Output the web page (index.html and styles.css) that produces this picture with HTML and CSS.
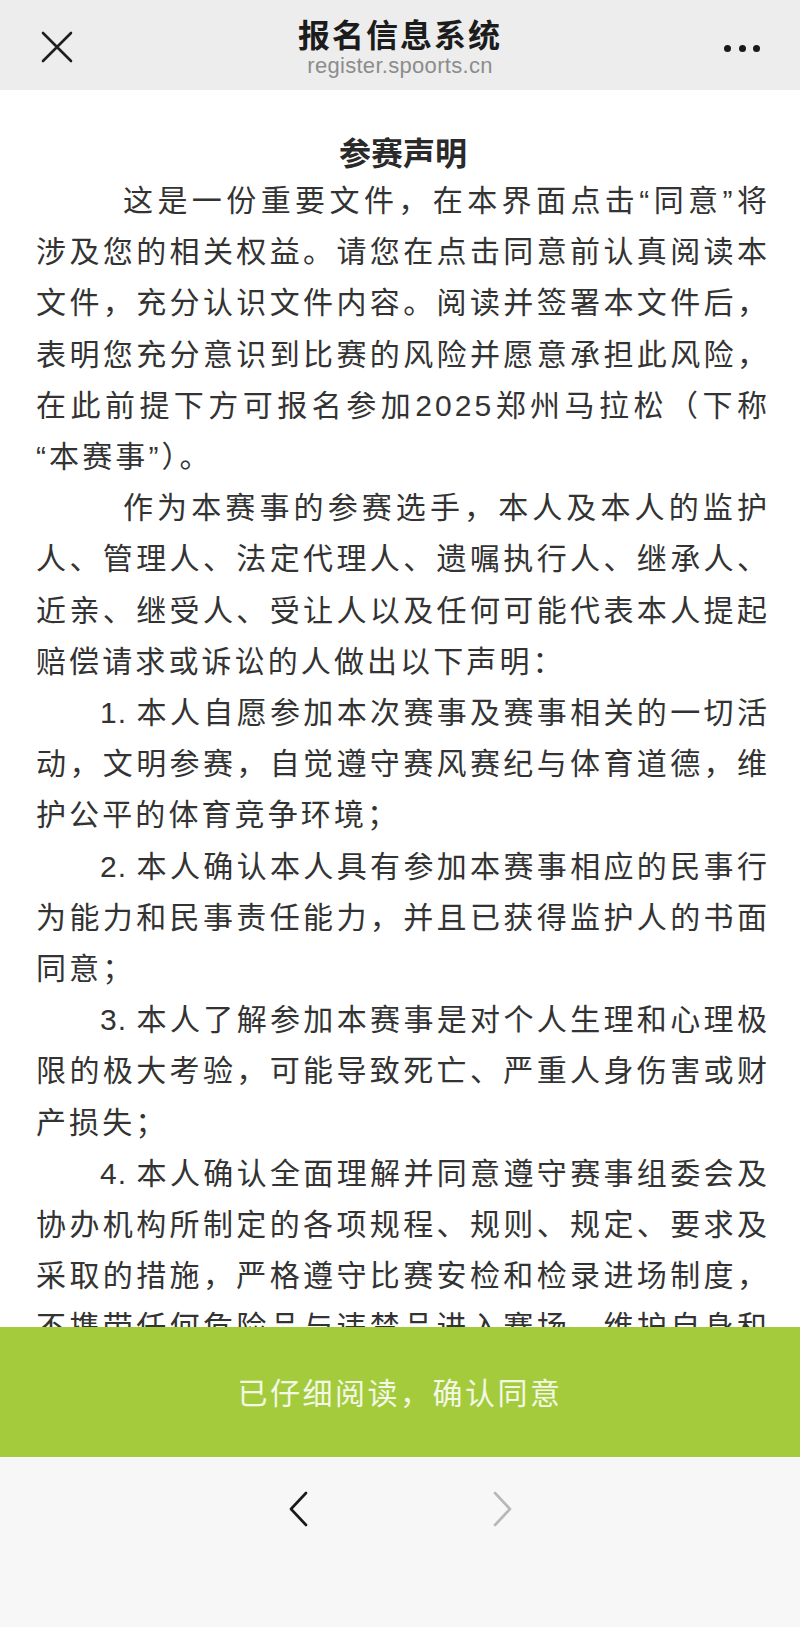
FILE: index.html
```html
<!DOCTYPE html>
<html lang="zh-CN">
<head>
<meta charset="utf-8">
<title>报名信息系统</title>
<link rel="stylesheet" href="styles.css">
</head>
<body>
<div class="app">
  <header class="topbar">
    <div class="topbar-left">
      <svg class="icon-close" width="32" height="32" viewBox="0 0 32 32" aria-hidden="true">
        <path d="M2 2 L30 30 M30 2 L2 30" stroke="#1f1f1f" stroke-width="2.6" stroke-linecap="round" fill="none"/>
      </svg>
    </div>
    <div class="topbar-center">
      <div class="topbar-title">报名信息系统</div>
      <div class="topbar-url">register.spoorts.cn</div>
    </div>
    <div class="topbar-right">
      <span class="dot"></span><span class="dot"></span><span class="dot"></span>
    </div>
  </header>

  <main class="content">
    <h1 class="doc-title">参赛声明</h1>
    <p class="para lead">这是一份重要文件，在本界面点击“同意”将涉及您的相关权益。请您在点击同意前认真阅读本文件，充分认识文件内容。阅读并签署本文件后，表明您充分意识到比赛的风险并愿意承担此风险，在此前提下方可报名参加2025郑州马拉松（下称“本赛事”）。</p>
    <p class="para lead">作为本赛事的参赛选手，本人及本人的监护人、管理人、法定代理人、遗嘱执行人、继承人、近亲、继受人、受让人以及任何可能代表本人提起赔偿请求或诉讼的人做出以下声明：</p>
    <p class="para item"><span class="num">1. </span>本人自愿参加本次赛事及赛事相关的一切活动，文明参赛，自觉遵守赛风赛纪与体育道德，维护公平的体育竞争环境；</p>
    <p class="para item"><span class="num">2. </span>本人确认本人具有参加本赛事相应的民事行为能力和民事责任能力，并且已获得监护人的书面同意；</p>
    <p class="para item"><span class="num">3. </span>本人了解参加本赛事是对个人生理和心理极限的极大考验，可能导致死亡、严重人身伤害或财产损失；</p>
    <p class="para item"><span class="num">4. </span>本人确认全面理解并同意遵守赛事组委会及协办机构所制定的各项规程、规则、规定、要求及采取的措施，严格遵守比赛安检和检录进场制度，不携带任何危险品与违禁品进入赛场，维护自身和他人的人身财产安全；</p>
    <p class="para item"><span class="num">5. </span>本人确认身体健康状况良好，具备参加本赛事的身体条件，并已为参赛做好充分准备。</p>
  </main>

  <button class="agree-btn" type="button">已仔细阅读，确认同意</button>

  <nav class="bottombar">
    <svg class="chev" width="20" height="36" viewBox="0 0 20 36" aria-hidden="true">
      <path d="M18 2 L3 18 L18 34" stroke="#1a1a1a" stroke-width="2.6" stroke-linecap="round" stroke-linejoin="round" fill="none"/>
    </svg>
    <svg class="chev" width="20" height="36" viewBox="0 0 20 36" aria-hidden="true">
      <path d="M2 2 L17 18 L2 34" stroke="#b8b8b8" stroke-width="2.6" stroke-linecap="round" stroke-linejoin="round" fill="none"/>
    </svg>
  </nav>
</div>
</body>
</html>
```

FILE: styles.css
```css
* {
  box-sizing: border-box;
}

html, body {
  margin: 0;
  padding: 0;
  height: 100%;
}

body {
  font-family: "Liberation Sans", "Noto Sans CJK SC", sans-serif;
  background: #ffffff;
  color: #333333;
}

.app {
  height: 100vh;
  display: flex;
  flex-direction: column;
  overflow: hidden;
}

/* ---------- top bar ---------- */
.topbar {
  flex: 0 0 90px;
  height: 90px;
  background: #ededed;
  display: grid;
  grid-template-columns: 120px 1fr 120px;
  align-items: center;
}

.topbar-left {
  display: flex;
  align-items: center;
  padding-left: 41px;
  padding-top: 3px;
}

.icon-close {
  display: block;
  width: 32px;
  height: 32px;
}

.topbar-center {
  display: flex;
  flex-direction: column;
  align-items: center;
  padding-top: 2px;
}

.topbar-title {
  font-family: "Noto Sans CJK SC", sans-serif;
  font-size: 32px;
  font-weight: 700;
  line-height: 40px;
  color: #1c1c1c;
  letter-spacing: 2px;
}

.topbar-url {
  font-family: "Liberation Sans", sans-serif;
  font-size: 22px;
  line-height: 26px;
  letter-spacing: 0.3px;
  color: #8c8c8c;
  margin-top: 0;
}

.topbar-right {
  display: flex;
  justify-content: flex-end;
  align-items: center;
  gap: 7.5px;
  padding-right: 40px;
  padding-top: 6px;
}

.dot {
  width: 7px;
  height: 7px;
  border-radius: 50%;
  background: #1a1a1a;
}

/* ---------- content ---------- */
.content {
  flex: 1 1 auto;
  min-height: 0;
  overflow: hidden;
  padding: 38px 30px 0 36px;
}

.doc-title {
  margin: 0;
  font-family: "Noto Sans CJK SC", sans-serif;
  font-size: 32px;
  font-weight: 700;
  letter-spacing: 0;
  line-height: 47px;
  text-align: center;
  color: #2a2a2a;
}

.para {
  margin: 0;
  font-size: 30px;
  line-height: 51.2px;
  letter-spacing: 3.1px;
  color: #333333;
  text-align: justify;
}

.para.lead {
  text-indent: 87px;
}

.para.item {
  text-indent: 64px;
}

.num {
  letter-spacing: 1px;
}

/* ---------- agree button ---------- */
.agree-btn {
  flex: 0 0 130px;
  height: 130px;
  width: 100%;
  border: none;
  margin: 0;
  background: #a4cb3c;
  color: #f3f8e6;
  font-family: "Noto Sans CJK SC", sans-serif;
  font-size: 30px;
  letter-spacing: 2.5px;
  display: flex;
  align-items: center;
  justify-content: center;
  padding: 0 0 2px 0;
}

/* ---------- bottom bar ---------- */
.bottombar {
  flex: 0 0 170px;
  height: 170px;
  background: #f7f7f7;
  border-top: 1px solid #fbfbfb;
  display: flex;
  justify-content: center;
  align-items: flex-start;
  gap: 185px;
  padding-top: 33px;
}

.chev {
  display: block;
}
```
